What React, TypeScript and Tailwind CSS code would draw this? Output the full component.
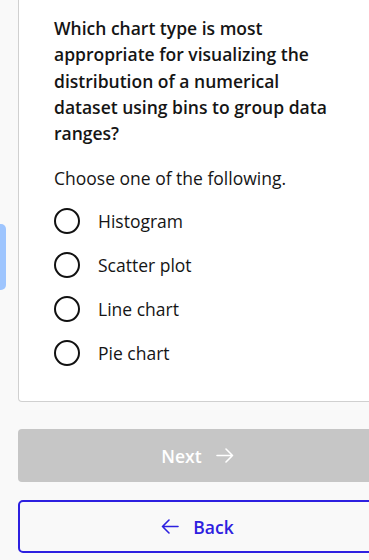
import React from "react";

const options = ["Histogram", "Scatter plot", "Line chart", "Pie chart"];

function ArrowRight({ className }: { className?: string }) {
  return (
    <svg width="18" height="15" viewBox="0 0 18 15" fill="none" className={className}>
      <path d="M1 7.5H16.5M10 1L16.5 7.5L10 14" stroke="currentColor" strokeWidth="1.6" strokeLinecap="round" strokeLinejoin="round" />
    </svg>
  );
}

function ArrowLeft({ className }: { className?: string }) {
  return (
    <svg width="18" height="15" viewBox="0 0 18 15" fill="none" className={className}>
      <path d="M17 7.5H1.5M8 1L1.5 7.5L8 14" stroke="currentColor" strokeWidth="1.6" strokeLinecap="round" strokeLinejoin="round" />
    </svg>
  );
}

export default function App() {
  return (
    <div
      className="relative w-[369px] h-[560px] overflow-hidden bg-[#f9f9f9]"
      style={{ fontFamily: '"Open Sans", "Noto Sans", sans-serif' }}
    >
      <div className="absolute left-0 top-[224px] w-[6px] h-[66px] bg-[#9ec5fe] rounded-r-[5px]" />
      <div className="ml-[18px] w-[359px] flex flex-col">
        <div className="bg-white border border-t-0 border-[#d0d0d0] rounded-b-[4px] pl-[35px] pr-[30px] pt-[15px] pb-[26px]">
          <p className="text-[17.5px] leading-[26.3px] font-semibold text-[#151515]">
            Which chart type is most appropriate for visualizing the distribution of a numerical dataset using bins to group data ranges?
          </p>
          <p className="mt-[19px] text-[17.5px] leading-[26px] text-[#151515]">Choose one of the following.</p>
          <div className="mt-[8px] flex flex-col">
            {options.map((o) => (
              <div key={o} className="h-[44px] flex items-center gap-[18px]">
                <div className="w-[26px] h-[26px] rounded-full border-2 border-[#111] bg-white shrink-0" />
                <span className="text-[17.5px] text-[#151515]">{o}</span>
              </div>
            ))}
          </div>
        </div>
        <button className="mt-[27px] h-[53px] rounded-[4px] bg-[#c6c6c6] text-white flex items-center justify-center gap-[14px] text-[17.5px] font-semibold">
          <span>Next</span>
          <ArrowRight />
        </button>
        <button className="mt-[18px] h-[53px] rounded-[5px] border-2 border-[#2d20e0] bg-[#f9f9f9] text-[#2d20e0] flex items-center justify-center gap-[14px] text-[17.5px] font-semibold">
          <ArrowLeft />
          <span>Back</span>
        </button>
      </div>
    </div>
  );
}
